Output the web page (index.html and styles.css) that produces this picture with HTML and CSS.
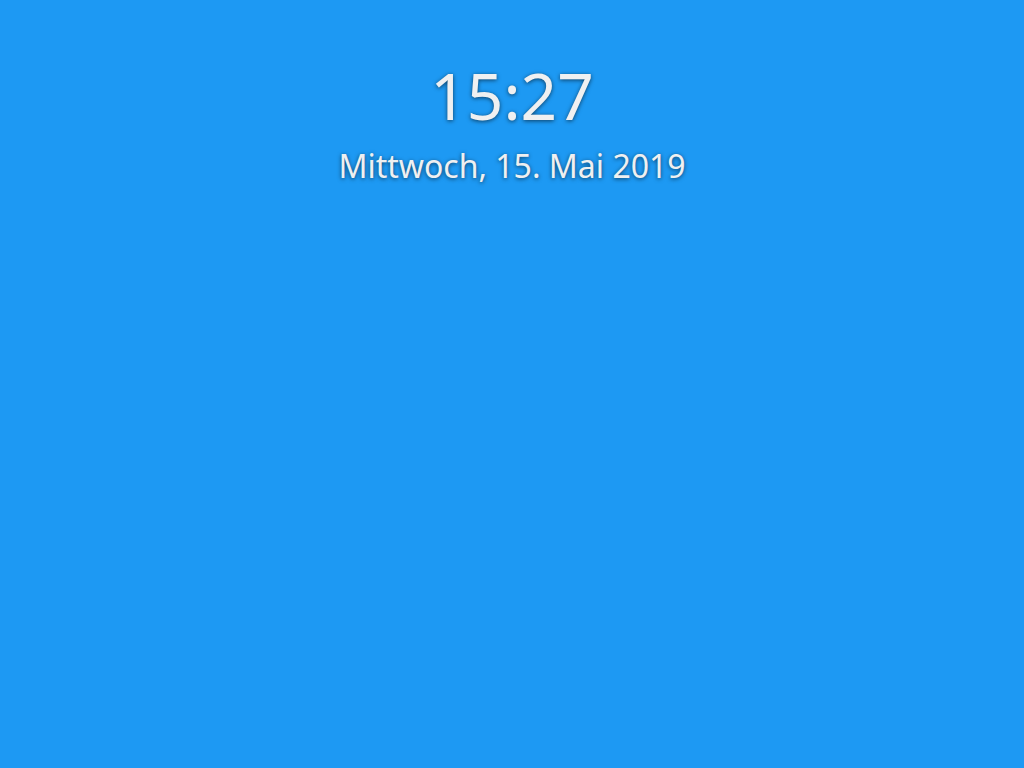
FILE: index.html
```html
<!DOCTYPE html>
<html lang="de">
<head>
<meta charset="utf-8">
<link rel="stylesheet" href="styles.css">
</head>
<body>
<main class="lock">
  <div class="clock">
    <div class="time">15:27</div>
    <div class="date">Mittwoch, 15. Mai 2019</div>
  </div>
</main>
</body>
</html>
```
FILE: styles.css
```css
html, body {
  margin: 0;
  padding: 0;
  width: 100%;
  height: 100%;
  background: #1d99f3;
  overflow: hidden;
}
.lock {
  display: flex;
  flex-direction: column;
  align-items: center;
  height: 100%;
}
.clock {
  display: flex;
  flex-direction: column;
  align-items: center;
  gap: 22px;
  padding-top: 64px;
  font-family: "Noto Sans", "DejaVu Sans", sans-serif;
  color: #eff0f1;
  text-shadow: 0 1px 4px rgba(0, 0, 0, 0.6);
}
.time {
  font-size: 64px;
  line-height: 64px;
}
.date {
  font-size: 32px;
  line-height: 32px;
}
```
